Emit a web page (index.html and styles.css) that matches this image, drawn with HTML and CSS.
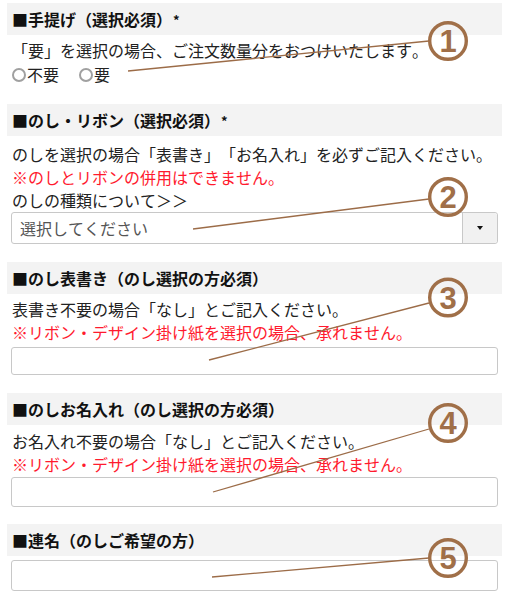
FILE: index.html
```html
<!DOCTYPE html>
<html lang="ja">
<head>
<meta charset="utf-8">
<link rel="stylesheet" href="styles.css">
</head>
<body>
<div class="page">
  <section class="field">
    <h2 class="field-title">■手提げ（選択必須）<span class="req">*</span></h2>
    <div class="field-body">
      <p class="note">「要」を選択の場合、ご注文数量分をおつけいたします。</p>
      <div class="radios">
        <label class="radio"><input type="radio" name="bag"><span>不要</span></label>
        <label class="radio"><input type="radio" name="bag"><span>要</span></label>
      </div>
    </div>
  </section>

  <section class="field">
    <h2 class="field-title">■のし・リボン（選択必須）<span class="req">*</span></h2>
    <div class="field-body body-noshi">
      <p class="note">のしを選択の場合「表書き」「お名入れ」を必ずご記入ください。</p>
      <p class="note warn">※のしとリボンの併用はできません。</p>
      <p class="note">のしの種類について＞＞</p>
      <div class="select">
        <span class="select-text">選択してください</span>
        <span class="select-btn"><span class="caret"></span></span>
      </div>
    </div>
  </section>

  <section class="field">
    <h2 class="field-title">■のし表書き（のし選択の方必須）</h2>
    <div class="field-body">
      <p class="note">表書き不要の場合「なし」とご記入ください。</p>
      <p class="note warn">※リボン・デザイン掛け紙を選択の場合、承れません。</p>
      <input class="text-input t3" type="text">
    </div>
  </section>

  <section class="field field-name">
    <h2 class="field-title">■のしお名入れ（のし選択の方必須）</h2>
    <div class="field-body body-name">
      <p class="note">お名入れ不要の場合「なし」とご記入ください。</p>
      <p class="note warn">※リボン・デザイン掛け紙を選択の場合、承れません。</p>
      <input class="text-input t4" type="text">
    </div>
  </section>

  <section class="field">
    <h2 class="field-title">■連名（のしご希望の方）</h2>
    <div class="field-body">
      <input class="text-input t5" type="text">
    </div>
  </section>

  <svg class="annot" width="511" height="597" viewBox="0 0 511 597" xmlns="http://www.w3.org/2000/svg">
    <g class="lines">
      <line x1="429" y1="41" x2="128" y2="71"/>
      <line x1="429" y1="199" x2="193" y2="229"/>
      <line x1="429" y1="303" x2="209" y2="360"/>
      <line x1="429" y1="429" x2="213" y2="492"/>
      <line x1="429" y1="558" x2="212" y2="577"/>
    </g>
    <g class="rings">
      <circle cx="448" cy="41" r="18.3"/>
      <circle cx="448" cy="197" r="18.3"/>
      <circle cx="448" cy="297.5" r="18.3"/>
      <circle cx="448" cy="423" r="18.3"/>
      <circle cx="448" cy="558" r="18.3"/>
    </g>
    <g class="nums">
      <text x="448" y="52">1</text>
      <text x="448" y="208">2</text>
      <text x="448" y="308.5">3</text>
      <text x="448" y="434">4</text>
      <text x="448" y="569">5</text>
    </g>
  </svg>
</div>
</body>
</html>
```

FILE: styles.css
```css
* { box-sizing: border-box; }
html, body { margin: 0; padding: 0; background: #fff; }
body {
  font-family: "Noto Sans CJK JP", "Noto Sans", sans-serif;
  font-size: 16px;
  color: #222;
  text-spacing-trim: space-all;
  font-kerning: none;
}
.page {
  position: relative;
  width: 511px;
  height: 597px;
  padding: 3px 9px 0 7px;
  overflow: hidden;
}
.field { margin-bottom: 18px; }
.field-name { margin-bottom: 17px; }
.field-title {
  margin: 0;
  height: 32px;
  line-height: 32px;
  padding-left: 5px;
  background: #f3f3f3;
  font-size: 16px;
  font-weight: bold;
  color: #111;
}
.req { font-size: 13px; margin-left: 1px; position: relative; top: -1px; }
.field-body {
  padding: 4px 4px 0 4px;
  display: flex;
  flex-direction: column;
}
.body-noshi { padding-top: 7px; }
.body-name { padding-top: 5px; }
.note {
  margin: 0;
  line-height: 23px;
  padding-left: 1px;
}
.warn { color: #ff1a2e; }
.radios { display: flex; gap: 19px; line-height: 23px; padding-top: 1px; }
.radio { display: flex; align-items: center; gap: 1px; }
.radio input {
  appearance: none;
  -webkit-appearance: none;
  width: 14px;
  height: 14px;
  margin: 0 0 0 1px;
  border: 2px solid #a0a0a0;
  border-radius: 50%;
  background: #fff;
}
.select {
  display: flex;
  height: 32px;
  border: 1px solid #c8c8c8;
  border-radius: 3px;
  background: #fff;
  margin-top: 0;
}
.select-text {
  flex: 1;
  line-height: 30px;
  padding-left: 8px;
  color: #555;
}
.select-btn {
  width: 35px;
  border-left: 1px solid #c8c8c8;
  background: #f1f1f1;
  display: flex;
  align-items: center;
  justify-content: center;
  border-radius: 0 3px 3px 0;
}
.caret {
  width: 0; height: 0;
  border-left: 3.5px solid transparent;
  border-right: 3.5px solid transparent;
  border-top: 4px solid #111;
}
.text-input {
  display: block;
  width: 100%;
  height: 30px;
  border: 1px solid #c8c8c8;
  border-radius: 3px;
  background: #fff;
  font: inherit;
  margin: 0;
}
.t3 { margin-top: 3px; height: 28px; }
.t4 { margin-top: 1px; height: 30px; }
.t5 { height: 31px; margin-top: 0; }
.annot {
  position: absolute;
  left: 0;
  top: 0;
  pointer-events: none;
}
.lines line { stroke: #9c6c48; stroke-width: 1.3; }
.rings circle { fill: none; stroke: #a06f48; stroke-width: 3.4; }
.nums text {
  fill: #a06f48;
  font-family: "Liberation Sans", Arial, sans-serif;
  font-weight: bold;
  font-size: 31px;
  text-anchor: middle;
}
```
